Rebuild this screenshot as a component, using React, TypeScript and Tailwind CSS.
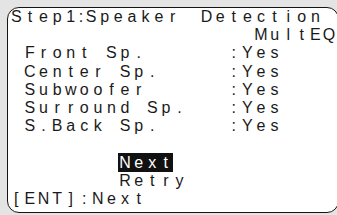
type Line = { text: string; hi?: [number, number]; wide?: Record<number, number> };

const rows: Line[] = [
  // colon is a half cell here, the gap before "Detection" takes the rest
  { text: "Step1:Speaker Detection", wide: { 5: 6.8, 13: 20.4 } },
  { text: "                  MultEQ" },
  { text: " Front Sp.      :Yes" },
  { text: " Center Sp.     :Yes" },
  { text: " Subwoofer      :Yes" },
  { text: " Surround Sp.   :Yes" },
  { text: " S.Back Sp.     :Yes" },
  { text: "" },
  { text: "        Next", hi: [8, 12] },
  { text: "        Retry" },
  { text: "[ENT]:Next" },
];

function Row({ text, hi, wide }: Line) {
  return (
    <div className="flex h-[18.2px] items-center">
      {text.split("").map((ch, i) => {
        const on = hi && i >= hi[0] && i < hi[1];
        const w = wide?.[i];
        return (
          <span
            key={i}
            style={w ? { width: w } : undefined}
            className={
              on
                ? "inline-flex h-[19px] w-[13.6px] shrink-0 items-center justify-center bg-[#111] text-white"
                : "inline-flex w-[13.6px] shrink-0 justify-center"
            }
          >
            {ch === " " ? "\u00a0" : ch}
          </span>
        );
      })}
    </div>
  );
}

export default function App() {
  return (
    <div className="h-[215px] w-[337px] overflow-hidden bg-[#e4e4e4] pl-[7px] pt-[7px]">
      <div
        className="h-[206px] w-[332px] rounded-[12px] border-[1.5px] border-[#151515] bg-white pl-[1.5px] text-[16px] leading-none text-[#1a1a1a]"
        style={{ fontFamily: '"Liberation Sans", Arial, sans-serif' }}
      >
        {rows.map((r, i) => (
          <Row key={i} {...r} />
        ))}
      </div>
    </div>
  );
}
